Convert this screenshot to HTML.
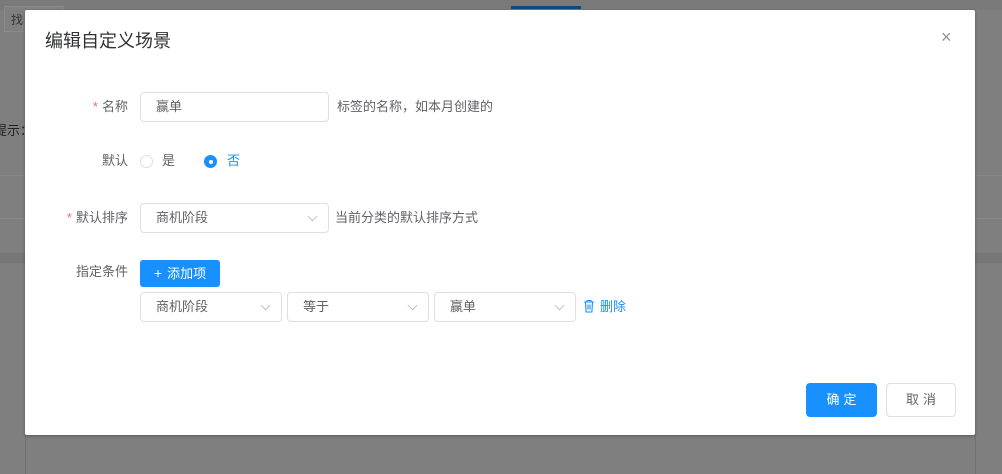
<!DOCTYPE html>
<html><head><meta charset="utf-8"><style>
*{box-sizing:border-box;margin:0;padding:0}
body{width:1002px;height:474px;overflow:hidden;background:#7f7f7f;position:relative;font-family:"Liberation Sans","Noto Sans CJK SC",sans-serif;font-size:13px;color:#606266}
.a{position:absolute}
.modal{left:25px;top:10px;width:950px;height:425px;background:#fff;border-radius:2px;box-shadow:0 1px 3px rgba(0,0,0,.3)}
.lbl{text-align:right;width:100px;color:#606266;font-size:13px;line-height:30px}
.req::before{content:"*";color:#f56c6c;margin-right:4px}
.inp{border:1px solid #dcdfe6;border-radius:4px;height:30px;line-height:28px;padding-left:15px;color:#606266;background:#fff}
.arr{position:absolute;right:12px;top:9px;width:7px;height:7px;border-right:1px solid #c0c4cc;border-bottom:1px solid #c0c4cc;transform:rotate(45deg)}
.tip{color:#606266;line-height:30px}
</style></head><body>
<div class="a" style="left:0;top:0;width:1002px;height:10px;background:#7a7a7a"></div>
<div class="a" style="left:4px;top:6px;width:60px;height:26px;border:1px solid #8a8a8a;background:#808080;color:#333;padding:4px 6px;font-size:12px">找</div>
<div class="a" style="left:511px;top:6px;width:70px;height:3px;background:#0e4a80"></div>
<div class="a" style="left:-6px;top:120px;color:#222;font-size:13px">提示：</div>
<div class="a" style="left:0;top:175px;width:1002px;height:1px;background:#888"></div>
<div class="a" style="left:0;top:218px;width:1002px;height:1px;background:#888"></div>
<div class="a" style="left:0;top:253px;width:1002px;height:10px;background:#777"></div>
<div class="a" style="left:25px;top:435px;width:1px;height:39px;background:#6f6f6f"></div>
<div class="a" style="left:975px;top:435px;width:1px;height:39px;background:#6f6f6f"></div>
<div class="a modal"></div>
<div class="a" style="left:45px;top:29px;font-size:18px;color:#303133;line-height:24px">编辑自定义场景</div>
<div class="a" style="left:941px;top:26px;font-size:18px;color:#909399;line-height:22px">×</div>

<div class="a lbl req" style="left:28px;top:92px">名称</div>
<div class="a inp" style="left:140px;top:92px;width:189px">赢单</div>
<div class="a tip" style="left:337px;top:92px">标签的名称，如本月创建的</div>

<div class="a lbl" style="left:28px;top:146px">默认</div>
<div class="a" style="left:140px;top:155px;width:13px;height:13px;border:1px solid #dcdfe6;border-radius:50%"></div>
<div class="a" style="left:162px;top:146px;line-height:30px;color:#606266">是</div>
<div class="a" style="left:204px;top:155px;width:13px;height:13px;background:#1890ff;border-radius:50%"><div style="width:4px;height:4px;background:#fff;border-radius:50%;margin:4.5px"></div></div>
<div class="a" style="left:227px;top:146px;line-height:30px;color:#1890ff">否</div>

<div class="a lbl req" style="left:28px;top:203px">默认排序</div>
<div class="a inp" style="left:140px;top:203px;width:189px">商机阶段<div class="arr"></div></div>
<div class="a tip" style="left:335px;top:203px">当前分类的默认排序方式</div>

<div class="a lbl" style="left:28px;top:257px">指定条件</div>
<div class="a" style="left:140px;top:260px;width:80px;height:27px;background:#1890ff;border-radius:3px;color:#fff;line-height:27px;text-align:center;font-size:13px"><span style="font-size:14px;margin-right:5px">+</span>添加项</div>
<div class="a inp" style="left:140px;top:292px;width:142px">商机阶段<div class="arr"></div></div>
<div class="a inp" style="left:287px;top:292px;width:142px">等于<div class="arr"></div></div>
<div class="a inp" style="left:434px;top:292px;width:142px">赢单<div class="arr"></div></div>
<svg class="a" style="left:583px;top:299px" width="12" height="14" viewBox="0 0 12 14" fill="none" stroke="#1890ff" stroke-width="1.1"><path d="M1 3h10M4 3V1.5h4V3M2.5 3l.6 10h5.8l.6-10M5 5.5v5M7 5.5v5"/></svg>
<div class="a" style="left:600px;top:292px;line-height:30px;color:#1890ff">删除</div>

<div class="a" style="left:806px;top:383px;width:71px;height:34px;background:#1890ff;border-radius:4px;color:#fff;text-align:center;line-height:34px;letter-spacing:4px;padding-left:4px">确定</div>
<div class="a" style="left:886px;top:383px;width:70px;height:34px;border:1px solid #dcdfe6;border-radius:4px;color:#606266;text-align:center;line-height:32px;letter-spacing:4px;padding-left:4px">取消</div>
</body></html>
